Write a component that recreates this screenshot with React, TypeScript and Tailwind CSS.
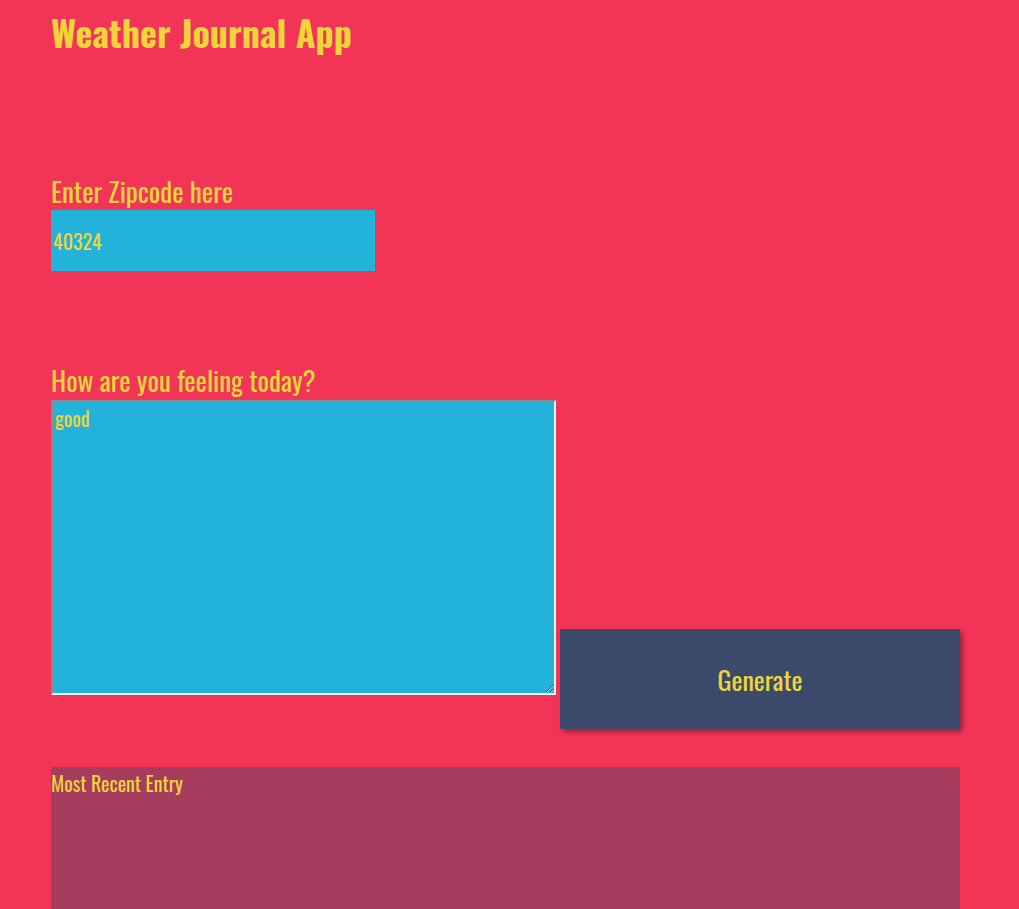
import React from "react";

const font = "font-['Oswald','Liberation_Sans_Narrow','DejaVu_Sans_Condensed',sans-serif]";

const App: React.FC = () => {
  return (
    <div className={`h-[909px] w-full overflow-hidden bg-[#f23557] text-[#f0d43a] ${font}`}>
      <div className="flex w-[960px] flex-col pl-[51px]">
        <h1 className="pt-[8px] text-[36px] font-bold leading-[48px]">Weather Journal App</h1>

        <div className="mt-[118px] flex flex-col">
          <label className="text-[27px] leading-[34px]">Enter Zipcode here</label>
          <input
            defaultValue="40324"
            className={`mt-[2px] h-[61px] w-[324px] bg-[#22b2da] px-[2px] text-[20px] text-[#f0d43a] outline-none ${font}`}
          />
        </div>

        <div className="mt-[92px] flex items-end">
          <div className="flex flex-col">
            <label className="text-[27px] leading-[34px]">How are you feeling today?</label>
            <textarea
              defaultValue="good"
              className={`mt-[3px] h-[295px] w-[505px] border-2 border-b-[#e8f4f8] border-l-[#8a8a8a] border-r-[#e8f4f8] border-t-[#8a8a8a] bg-[#22b2da] px-[2px] py-[4px] text-[20px] leading-[24px] text-[#f0d43a] outline-none ${font}`}
            />
          </div>
          <button
            className={`mb-[-34px] ml-[4px] h-[100px] w-[400px] bg-[#3b4a6b] text-[26px] text-[#f0d43a] shadow-[3px_3px_5px_rgba(0,0,0,0.35)] ${font}`}
          >
            Generate
          </button>
        </div>

        <div className="mt-[72px] h-[200px] w-[909px] bg-[#a63c5e]">
          <div className="text-[20px] leading-[32px]">Most Recent Entry</div>
        </div>
      </div>
    </div>
  );
};

export default App;
